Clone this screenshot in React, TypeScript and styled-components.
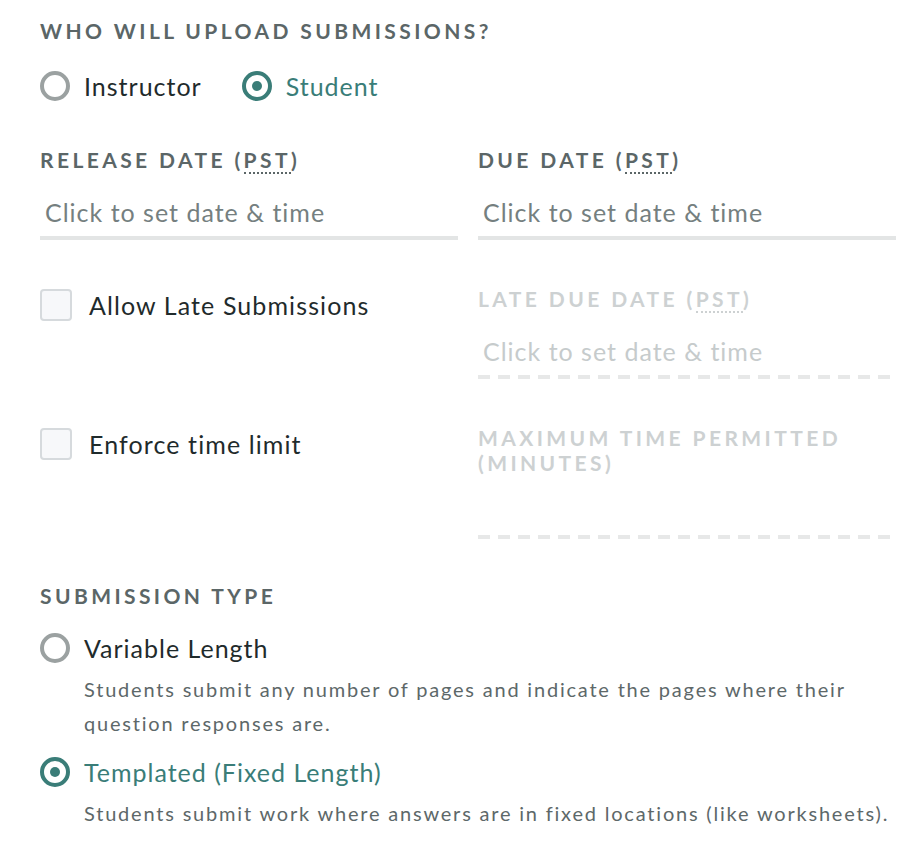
import styled, { createGlobalStyle } from 'styled-components';

const GlobalStyle = createGlobalStyle`
    body {
        margin: 0;
        background: #ffffff;
        font-family: "Lato", "Open Sans", sans-serif;
    }
`;

const colors = {
    heading: "#5b6667",
    text: "#1f2b2c",
    teal: "#3a7d78",
    muted: "#5d6869",
    placeholder: "#757f80",
    faded: "#cdd1d2",
    fadedPlaceholder: "#c6cbcc",
    line: "#e3e5e5",
    dash: "#e7e8e8",
    radio: "#9ba1a1",
};

const Page = styled.div`
    width: 856px;
    padding: 18px 20px 0 40px;
`;

const Heading = styled.div<{ $faded?: boolean }>`
    font-size: 21px;
    line-height: 25px;
    font-weight: 700;
    letter-spacing: 3.4px;
    text-transform: uppercase;
    color: ${p => (p.$faded ? colors.faded : colors.heading)};
`;

const Abbr = styled.span`
    border-bottom: 2px dotted currentColor;
`;

const RadioGroup = styled.div`
    display: flex;
    gap: 40px;
    margin-top: 27px;
`;

const RadioLabel = styled.label<{ $checked?: boolean }>`
    display: flex;
    align-items: center;
    gap: 14px;
    font-size: 25px;
    line-height: 32px;
    letter-spacing: 1px;
    color: ${p => (p.$checked ? colors.teal : colors.text)};
    cursor: pointer;
`;

const RadioCircle = styled.span<{ $checked?: boolean }>`
    box-sizing: border-box;
    display: flex;
    align-items: center;
    justify-content: center;
    width: 30px;
    height: 30px;
    border-radius: 50%;
    border: 4px solid ${p => (p.$checked ? colors.teal : colors.radio)};

    &::after {
        content: "";
        display: ${p => (p.$checked ? "block" : "none")};
        width: 10px;
        height: 10px;
        border-radius: 50%;
        background: ${colors.teal};
    }
`;

const Grid = styled.div`
    display: grid;
    grid-template-columns: 418px 418px;
    column-gap: 20px;
    row-gap: 46px;
    margin-top: 45px;
`;

const Field = styled.div`
    display: flex;
    flex-direction: column;
    gap: 20px;
`;

const DateInput = styled.div<{ $disabled?: boolean }>`
    padding: 5px 5px 13px;
    font-size: 25px;
    line-height: 30px;
    letter-spacing: 1px;
    color: ${p => (p.$disabled ? colors.fadedPlaceholder : colors.placeholder)};
    background: ${p =>
        p.$disabled
            ? `repeating-linear-gradient(to right, ${colors.dash} 0 12px, transparent 12px 20px) bottom left / 100% 4px no-repeat`
            : `linear-gradient(${colors.line}, ${colors.line}) bottom left / 100% 4px no-repeat`};
    min-height: 26px;
    cursor: pointer;
`;

const CheckRow = styled.label`
    display: flex;
    align-items: center;
    gap: 17px;
    padding-top: 3px;
    align-self: start;
    font-size: 25px;
    line-height: 32px;
    letter-spacing: 1.1px;
    color: ${colors.text};
`;

const CheckBox = styled.span`
    box-sizing: border-box;
    width: 32px;
    height: 32px;
    border: 2px solid #d6dadd;
    border-radius: 4px;
    background: #f7f8fa;
`;

const Section = styled.div`
    margin-top: 44px;
`;

const Option = styled.div`
    margin-top: 24px;

    & + & {
        margin-top: 16px;
    }
`;

const Description = styled.div`
    margin: 8px 0 0 44px;
    font-size: 20px;
    line-height: 34px;
    letter-spacing: 1.8px;
    color: ${colors.muted};
`;

function Pst()
{
    return <>(<Abbr>PST</Abbr>)</>;
}

function Radio({ label, checked } : { label : string, checked? : boolean })
{
    return (
        <RadioLabel $checked={checked}>
            <RadioCircle $checked={checked}/>
            {label}
        </RadioLabel>
    );
}

export default function App()
{
    return (
        <>
            <GlobalStyle/>
            <Page>
                <Heading>Who will upload submissions?</Heading>
                <RadioGroup>
                    <Radio label="Instructor"/>
                    <Radio label="Student" checked/>
                </RadioGroup>

                <Grid>
                    <Field>
                        <Heading>Release Date <Pst/></Heading>
                        <DateInput>Click to set date &amp; time</DateInput>
                    </Field>
                    <Field>
                        <Heading>Due Date <Pst/></Heading>
                        <DateInput>Click to set date &amp; time</DateInput>
                    </Field>

                    <CheckRow><CheckBox/>Allow Late Submissions</CheckRow>
                    <Field>
                        <Heading $faded>Late Due Date <Pst/></Heading>
                        <DateInput $disabled>Click to set date &amp; time</DateInput>
                    </Field>

                    <CheckRow><CheckBox/>Enforce time limit</CheckRow>
                    <Field>
                        <Heading $faded>Maximum Time Permitted (Minutes)</Heading>
                        <DateInput $disabled/>
                    </Field>
                </Grid>

                <Section>
                    <Heading>Submission Type</Heading>
                    <Option>
                        <Radio label="Variable Length"/>
                        <Description>
                            Students submit any number of pages and indicate the pages where their question responses are.
                        </Description>
                    </Option>
                    <Option>
                        <Radio label="Templated (Fixed Length)" checked/>
                        <Description>
                            Students submit work where answers are in fixed locations (like worksheets).
                        </Description>
                    </Option>
                </Section>
            </Page>
        </>
    );
}
